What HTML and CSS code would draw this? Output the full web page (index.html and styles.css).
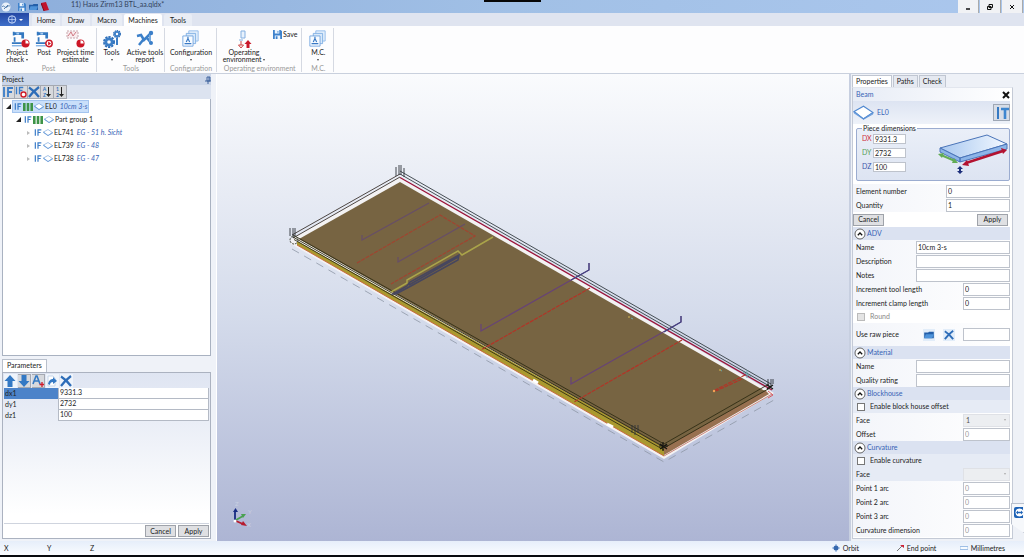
FILE: index.html
```html
<!DOCTYPE html>
<html lang="en">
<head>
<meta charset="utf-8">
<title>11) Haus Zirm13 BTL_aa.qldx*</title>
<link rel="stylesheet" href="styles.css">
</head>
<body>
<svg class="defs" aria-hidden="true">
  <defs>
    <linearGradient id="blue" x1="0" y1="0" x2="1" y2="0"><stop offset="0" stop-color="#a9c8f0"/><stop offset="1" stop-color="#f2f8ff"/></linearGradient>
    <symbol id="machine" viewBox="0 0 20 20"><path d="M3 4h10v5.500" fill="none" stroke="#3478c0" stroke-width="3"/><path d="M3 2v4M4 8v5M1 14.500h11" fill="none" stroke="#3478c0" stroke-width="2"/><path d="M1 17.500h11" fill="none" stroke="#7fb0e4" stroke-width="1.500"/><path d="M6 3h3v2H6z" fill="#a7cbf0"/></symbol>
    <symbol id="clock" viewBox="0 0 10 10"><circle cx="5" cy="5" r="4.500" fill="#cc1626"/><path d="M5 5V1.500A3.500 3.500 0 0 1 8.500 5z" fill="#fff"/></symbol>
    <symbol id="play" viewBox="0 0 10 10"><circle cx="5" cy="5" r="4" fill="#fff" stroke="#cc1626" stroke-width="1.800"/><path d="M4 2.500v5L7.500 5z" fill="#cc1626"/></symbol>
    <symbol id="gear" viewBox="0 0 12 12"><circle cx="6" cy="6" r="5" fill="none" stroke="#2f6fb9" stroke-width="2" stroke-dasharray="2.200 1"/><circle cx="6" cy="6" r="3.200" fill="none" stroke="#3c7ec6" stroke-width="2.800"/></symbol>
    <symbol id="layers" viewBox="0 0 20 20"><path d="M8 1h11v12H8z" fill="#e4f0fc" stroke="#8ab7e8"/><path d="M5 4h11v12H5z" fill="#d9e9fa" stroke="#7aabe2"/><path d="M1 7h12v12H1z" fill="#f7fbff" stroke="#6ba1de"/><path d="M3 16h8M5 14l2-4 2 4M7 8v2" fill="none" stroke="#3979c5" stroke-width="1.400"/></symbol>
    <symbol id="save" viewBox="0 0 10 10"><path d="M0 0h8.500L10 1.500V10H0z" fill="#3e82cc"/><path d="M2 0h5v4H2zM2 6h6v4H2z" fill="#edf6ff"/><path d="M5 1h1v2H5zM3 7h2v3H3z" fill="#3e82cc"/></symbol>
    <symbol id="cross" viewBox="0 0 12 12"><path d="M1 1.500C5 4 8 7 11 11M11 1C7 4 4 7 1 11" fill="none" stroke="#2e6db8" stroke-width="2.200"/></symbol>
    <symbol id="slab" viewBox="0 0 20 14"><path d="M1 6l9-5 9 6-9 6z" fill="#fff" stroke="#4f88d0"/><path d="M1 6v1.500L10 13.500l9-5V7l-9 6z" fill="#7fafe6" stroke="#4f88d0" stroke-width=".6"/></symbol>
    <symbol id="bars" viewBox="0 0 10 8"><path d="M0 0h2.600v8H0zM3.700 0h2.600v8H3.700zM7.400 0H10v8H7.400z" fill="#3e9448"/></symbol>
    <symbol id="if" viewBox="0 0 12 12"><path d="M2 1v10M6 1v10M6 2h5M6 6h4" fill="none" stroke="#3a7cc8" stroke-width="1.800"/></symbol>
    <symbol id="up" viewBox="0 0 12 12"><path d="M6 0l5.500 6H8.500v6h-5V6H.5z" fill="#3479c4"/></symbol>
    <symbol id="folder" viewBox="0 0 12 10"><path d="M0 2h5l1-1h6v8H0z" fill="#245fa9"/><path d="M2 4h10l-2 5H0z" fill="#4e93da"/></symbol>
    <symbol id="chev" viewBox="0 0 12 12"><circle cx="6" cy="6" r="5" fill="#fff" stroke="#555" stroke-width=".9"/><path d="M3.800 7.200L6 5l2.200 2.200" fill="none" stroke="#111" stroke-width="1.300"/></symbol>
  </defs>
</svg>
<div class="app">
  <header class="titlebar">
    <div class="quick">
      <svg width="10" height="10" viewBox="0 0 10 10"><circle cx="5" cy="5" r="4.500" fill="#e9f1fa"/><path d="M1 5c2-3 3 2 5 0s2-1 3-1M3 7l4-4" fill="none" stroke="#557fae"/></svg>
      <svg class="gap" width="8" height="8"><use href="#save"/></svg>
      <svg width="9" height="8"><use href="#folder"/></svg>
      <svg width="8" height="9" viewBox="0 0 8 9"><path d="M0 1l5-1 3 8-5 1z" fill="#c1142c"/><path d="M0 1l3 8" stroke="#7c0919"/></svg>
    </div>
    <span class="doc">11) Haus Zirm13 BTL_aa.qldx*</span>
    <span class="notch"></span>
    <div class="winbtns">
      <button aria-label="Minimise"><svg width="8" height="8"><path d="M2 6h4" stroke="#111" stroke-width="1.500"/></svg></button>
      <button aria-label="Restore"><svg width="8" height="8"><path d="M3 1.500h3.500v3H3zM1.500 3.500H5v3H1.500z" fill="#eee" stroke="#111"/></svg></button>
      <button aria-label="Close"><svg width="8" height="8"><path d="M2 2l4 4M6 2L2 6" stroke="#111"/></svg></button>
    </div>
  </header>
  <nav class="tabs">
    <button class="appmenu" aria-label="Application menu"><svg width="10" height="9" viewBox="0 0 10 9"><circle cx="5" cy="4.500" r="3.700" fill="none" stroke="#c5d8fa"/><path d="M1 4.500h8M5 1v7" stroke="#c5d8fa" stroke-width=".7"/></svg><i class="arr light"></i></button>
    <button class="w-home">Home</button><button class="w-draw">Draw</button><button class="w-macro">Macro</button><button class="w-mach on">Machines</button><button class="w-tools">Tools</button>
  </nav>
  <section class="ribbon">
    <div class="group">
      <div class="cmds">
        <button class="c32"><svg width="26" height="20"><use href="#machine" x="7" y="1" width="18" height="18"/><use href="#clock" x="17" y="10" width="9" height="9"/></svg><span>Project<br>check <i class="arr"></i></span></button>
        <button class="c20"><svg width="20" height="20"><use href="#machine" x="1" y="1" width="18" height="18"/><use href="#play" x="11" y="10" width="8" height="9"/></svg><span>Post</span></button>
        <button class="c40"><svg width="26" height="20"><path d="M4 2h11v7H4z" fill="#f8ecee" stroke="#c8a7ad" stroke-dasharray="2 1"/><path d="M5 7l3-4 2 4 3-4" fill="none" stroke="#d07883"/><use href="#clock" x="13" y="10" width="9" height="9"/></svg><span>Project time<br>estimate</span></button>
      </div><div class="gname">Post</div>
    </div>
    <div class="group">
      <div class="cmds">
        <button class="c26"><svg width="20" height="20"><use href="#gear" x="1" y="7" width="12" height="12"/><use href="#gear" x="11" y="1" width="8" height="8"/><path d="M15 9v7" stroke="#3c7ec6" stroke-width="2"/></svg><span>Tools<br><i class="arr"></i></span></button>
        <button class="c36"><svg width="20" height="20"><path d="M2 7l4-1 3 5 7-7M4 16l4-5M12 9l4 5" fill="none" stroke="#3b7fc9" stroke-width="2.500"/><path d="M15 5v8" stroke="#76a9de" stroke-width="2"/><circle cx="16" cy="4" r="2.200" fill="#3b7fc9"/><circle cx="16" cy="14" r="2" fill="#3b7fc9"/></svg><span>Active tools<br>report</span></button>
      </div><div class="gname">Tools</div>
    </div>
    <div class="group">
      <div class="cmds">
        <button class="c44"><svg width="20" height="20"><use href="#layers" x="1" y="1" width="17" height="17"/></svg><span>Configuration<br><i class="arr"></i></span></button>
      </div><div class="gname">Configuration</div>
    </div>
    <div class="group">
      <div class="cmds">
        <button class="c50"><svg width="20" height="20"><path d="M7 2h4v7H7zM5 11h4" fill="#e8f2fd" stroke="#84afe0"/><path d="M7 12v4M7 19l-2.500-3h5z" fill="#fff" stroke="#c44"/><path d="M14 11l-3.500 4h2v4h3v-4h2z" fill="#c9182a"/></svg><span>Operating<br>environment <i class="arr"></i></span></button>
        <button class="inline"><svg width="9" height="9"><use href="#save"/></svg>Save</button>
      </div><div class="gname">Operating environment</div>
    </div>
    <div class="group">
      <div class="cmds">
        <button class="c22"><svg width="20" height="20"><use href="#layers" x="1" y="1" width="17" height="17"/></svg><span>M.C.<br><i class="arr"></i></span></button>
      </div><div class="gname">M.C.</div>
    </div>
  </section>

  <main class="work">
    <aside class="left">
      <section class="project">
        <h2>Project <svg width="6" height="8" viewBox="0 0 6 8"><path d="M2 1h3v4H2zM0 5h6M3 5v3M4 1v4" fill="none" stroke="#40649e"/></svg></h2>
        <div class="tools">
          <button aria-label="Show all"><svg width="12" height="12"><use href="#if"/></svg></button>
          <button aria-label="Hide"><svg width="12" height="12"><use href="#if" width="9" height="9"/><circle cx="8.500" cy="8.500" r="2.500" fill="#fff" stroke="#d01f2b" stroke-width="1.400"/></svg></button>
          <button aria-label="Delete"><svg width="12" height="12"><use href="#cross"/></svg></button>
          <button aria-label="Sort by name"><span class="sort"><b>A</b><b>Z</b></span><svg width="5" height="12"><path d="M2.500 1v8" stroke="#222"/><path d="M0 8h5l-2.500 3z" fill="#222"/></svg></button>
          <button aria-label="Sort by number"><span class="sort"><b>1</b><b>2</b></span><svg width="5" height="12"><path d="M2.500 1v8" stroke="#222"/><path d="M0 8h5l-2.500 3z" fill="#222"/></svg></button>
        </div>
        <ul class="tree">
          <li><i class="open"></i><span class="node sel"><svg width="8" height="9"><use href="#if"/></svg><svg width="10" height="8"><use href="#bars"/></svg><svg width="10" height="9"><use href="#slab"/></svg>EL0 <em>10cm 3-s</em></span></li>
          <li class="l1"><i class="open"></i><span class="node"><svg width="8" height="9"><use href="#if"/></svg><svg width="10" height="8"><use href="#bars"/></svg><svg width="10" height="9"><use href="#slab"/></svg>Part group 1</span></li>
          <li class="l2"><i class="shut"></i><span class="node"><svg width="8" height="9"><use href="#if"/></svg><svg width="10" height="9"><use href="#slab"/></svg>EL741 <em>EG - 51 h. Sicht</em></span></li>
          <li class="l2"><i class="shut"></i><span class="node"><svg width="8" height="9"><use href="#if"/></svg><svg width="10" height="9"><use href="#slab"/></svg>EL739 <em>EG - 48</em></span></li>
          <li class="l2"><i class="shut"></i><span class="node"><svg width="8" height="9"><use href="#if"/></svg><svg width="10" height="9"><use href="#slab"/></svg>EL738 <em>EG - 47</em></span></li>
        </ul>
      </section>
      <section class="params">
        <div class="ptabs"><button>Parameters</button></div>
        <div class="pbox">
          <div class="tools ptools">
            <button class="flat" aria-label="Move up"><svg width="12" height="12"><use href="#up"/></svg></button>
            <button aria-label="Move down"><svg width="12" height="12"><path d="M6 12L.5 6h3V0h5v6h3z" fill="#3479c4"/></svg></button>
            <button aria-label="Rename"><svg width="12" height="12"><path d="M1 9l3-8h1l3 8M2 6h5" fill="none" stroke="#3479c4" stroke-width="1.600"/><path d="M10 7v5M7.500 9.500h5" stroke="#cf1b2a" stroke-width="1.300"/></svg></button>
            <button class="flat" aria-label="Import"><svg width="12" height="12"><path d="M2 1h5l2 2v8H2z" fill="#fff" stroke="#c7d7ea"/><path d="M2 9c1-4 3-5 5-5V2l4 4-4 3V7C5 7 4 8 4 10z" fill="#3479c4"/></svg></button>
            <button class="flat" aria-label="Remove"><svg width="12" height="12"><use href="#cross"/></svg></button>
          </div>
          <div class="prow cur"><label for="dx1">dx1</label><input id="dx1" value="9331.3"></div>
          <div class="prow"><label for="dy1">dy1</label><input id="dy1" value="2732"></div>
          <div class="prow"><label for="dz1">dz1</label><input id="dz1" value="100"></div>
          <div class="pfoot"><button class="btn">Cancel</button><button class="btn">Apply</button></div>
        </div>
      </section>
    </aside>

    <section class="view">
      <svg viewBox="217 74 632 467" preserveAspectRatio="xMidYMid slice" fill="none" role="img" aria-label="3D view of the panel">
        <path d="M399 177L291 239v5L664 459l110-66z" fill="#f3f2f3"/>
        <path d="M292 249L664 462l110-62" stroke="#8e97a6" stroke-width=".8" stroke-dasharray="8 6"/>
        <path d="M297 241L664 447v9L297 245z" fill="#aa992f"/>
        <path d="M664 447l101-57 4 4-105 61z" fill="#987050"/>
        <path d="M400 182L299 239 664 448l101-57z" fill="#776442"/>
        <path d="M297 245L664 456" stroke="#c86037" stroke-width=".9"/>
        <path d="M664 456l108-62" stroke="#c87a6c" stroke-width=".9"/>
        <path d="M400 177.500L772 390" stroke="#9c1238" stroke-width="1.300"/>
        <path d="M292 235L400 174M293 238L400 177" stroke="#4e4744"/>
        <path d="M400 171L771 384M400 174L771 387" stroke="#343c42" stroke-width=".9"/>
        <path d="M293 235L664 444M293 237L664 447M294 239.500L664 450M664 444l105-60M664 448l106-60" stroke="#302c14" stroke-width=".9"/>
        <path d="M396 176v-9M399 175v-10M401 175v-10M404 177v-9M290 236v-8M293 238v-10M295 236v-8M632 433v-8M635 435v-10M638 433v-8M768 386v-7M771 387v-8M773 384v-5" stroke="#30343a" stroke-width=".9"/>
        <circle cx="294" cy="240" r="4" stroke="#494b3e" stroke-dasharray="2 1"/>
        <path d="M660 444l7 5m-7 0l7-5m-4-2v9m-4-5h9M767 385l6 4m-6 0l6-4" stroke="#151510" stroke-width="1.200"/>
        <g stroke="#674e68" stroke-width="1.200"><path d="M429 203L362 240v-5M465 224l-67 38v-5"/></g>
        <path d="M589 263v7L481 331v-7M681 316v6l-110 62v-7" stroke="#674377" stroke-width="1.200"/>
        <path d="M589 263v7l-18 10M681 316v6l-17 10" stroke="#404284" stroke-width="1.100"/>
        <g stroke="#a04430" stroke-width="1.200" stroke-dasharray="4 1"><path d="M357 263l83-48 35 21-84 48"/></g>
        <g stroke="#b23427" stroke-width="1.200" stroke-dasharray="4 1"><path d="M590 288L481 350M682 340l-108 62M745 375l-32 16M742 379l-26 12"/></g>
        <path d="M391 292l16-9v-3l51-29 4 4 31-18" stroke="#aaa44a" stroke-width="1.500"/>
        <path d="M393 294l14-8 3-4 49-27-1 5-47 26-15 8zM409 285l49-28" stroke="#46465f" stroke-width="1.500"/>
        <path d="M533 380l5 3M607 424l6 3" stroke="#fff" stroke-width="3"/>
        <path d="M743 372l8 5m-4-7v8M631 318l2 1M720 370l2 1" stroke="#6aa9ae"/>
        <circle cx="714" cy="391" r="1.200" fill="#f4a154"/><circle cx="629" cy="317" r="1" fill="#b69c50"/><circle cx="720" cy="370" r="1" fill="#b69c50"/>
        <path d="M768 391l5 4-5 3" stroke="#d85a62"/>
        <path d="M235 520v-9" stroke="#172b83" stroke-width="1.800"/><path d="M233 512l2.500-4 2.500 4z" fill="#172b83"/>
        <path d="M236 520l7-4" stroke="#49a151" stroke-width="1.800"/><path d="M241 514l5 0-3 4z" fill="#49a151"/>
        <path d="M236 521l7 3" stroke="#b61b2e" stroke-width="1.800"/><path d="M241 525l2-4 4 5z" fill="#b61b2e"/><circle cx="235" cy="521" r="1.500" fill="#fff"/>
        <g class="axes"><text x="235" y="506">Z</text><text x="248" y="514">Y</text><text x="247" y="527">X</text></g>
      </svg>
    </section>

    <aside class="right">
      <div class="rtabs"><button class="on">Properties</button><button>Paths</button><button>Check</button></div>
      <div class="props">
        <div class="rhead beam"><span>Beam</span><button aria-label="Close panel"><svg width="8" height="8"><path d="M1 1l6 6M7 1L1 7" stroke="#111" stroke-width="2"/></svg></button></div>
        <div class="elem"><svg width="21" height="15"><use href="#slab"/></svg><span>EL0</span><button aria-label="Tool settings"><svg width="14" height="14"><path d="M3 1v6M3 7v6" stroke="#3579c3" stroke-width="2"/><path d="M6 3h8M10 3v10" stroke="#3e86cf" stroke-width="2.600"/></svg></button></div>
        <fieldset>
          <legend>Piece dimensions</legend>
          <div class="dims">
            <div><label class="dx" for="pdx">DX</label><input id="pdx" value="9331.3"></div>
            <div><label class="dy" for="pdy">DY</label><input id="pdy" value="2732"></div>
            <div><label class="dz" for="pdz">DZ</label><input id="pdz" value="100"></div>
          </div>
          <svg width="70" height="42" viewBox="0 0 70 42"><path d="M2 15L49 2l20 9-47 14z" fill="url(#blue)" stroke="#4a74b8"/><path d="M2 15v4l20 10v-4zM22 25v4l47-13v-5z" fill="#8db5e8" stroke="#4a74b8"/><path d="M3 22l14 6" stroke="#62ac55" stroke-width="2"/><path d="M0 21l6-1-2 5zM20 30l-6 0 2-5z" fill="#62ac55"/><path d="M28 30l37-12" stroke="#b31230" stroke-width="2.500"/><path d="M24 32l5-5 2 6zM69 17l-6-2 2 6z" fill="#b31230"/><path d="M22 34v5" stroke="#1c2e7a" stroke-width="2"/><path d="M19 36l3-3 3 3zM19 38l3 3 3-3z" fill="#1c2e7a"/></svg>
        </fieldset>
        <div class="row"><label for="en">Element number</label><input class="w64" id="en" value="0"></div>
        <div class="row"><label for="qt">Quantity</label><input class="w64" id="qt" value="1"></div>
        <div class="rbtns"><button class="btn">Cancel</button><button class="btn">Apply</button></div>

        <button class="rhead"><svg width="12" height="12"><use href="#chev"/></svg>ADV</button>
        <div class="row"><label for="nm">Name</label><input class="w94" id="nm" value="10cm 3-s"></div>
        <div class="row"><label for="ds">Description</label><input class="w94" id="ds"></div>
        <div class="row"><label for="nt">Notes</label><input class="w94" id="nt"></div>
        <div class="row"><label for="it">Increment tool length</label><input class="w46" id="it" value="0"></div>
        <div class="row"><label for="ic">Increment clamp length</label><input class="w46" id="ic" value="0"></div>
        <div class="chk off"><input type="checkbox" id="rd" disabled><label for="rd">Round</label></div>
        <div class="row raw"><label for="rw">Use raw piece</label><button aria-label="Browse"><svg width="10" height="8"><use href="#folder"/></svg></button><button aria-label="Clear"><svg width="10" height="10"><use href="#cross"/></svg></button><input class="w46" id="rw"></div>

        <button class="rhead"><svg width="12" height="12"><use href="#chev"/></svg>Material</button>
        <div class="row"><label for="mn">Name</label><input class="w94" id="mn"></div>
        <div class="row"><label for="qr">Quality rating</label><input class="w94" id="qr"></div>

        <button class="rhead"><svg width="12" height="12"><use href="#chev"/></svg>Blockhouse</button>
        <div class="chk tint"><input type="checkbox" id="eb"><label for="eb">Enable block house offset</label></div>
        <div class="row"><label for="bf">Face</label><span class="pick w46"><select id="bf" disabled><option>1</option></select><i class="arr"></i></span></div>
        <div class="row"><label for="bo">Offset</label><input class="w46" id="bo" value="0" disabled></div>

        <button class="rhead"><svg width="12" height="12"><use href="#chev"/></svg>Curvature</button>
        <div class="chk tint"><input type="checkbox" id="ec"><label for="ec">Enable curvature</label></div>
        <div class="row tint"><label for="cf">Face</label><span class="pick w46"><select id="cf" disabled><option></option></select><i class="arr"></i></span></div>
        <div class="row"><label for="p1">Point 1 arc</label><input class="w46" id="p1" value="0" disabled></div>
        <div class="row"><label for="p2">Point 2 arc</label><input class="w46" id="p2" value="0" disabled></div>
        <div class="row"><label for="p3">Point 3 arc</label><input class="w46" id="p3" value="0" disabled></div>
        <div class="row"><label for="cd">Curvature dimension</label><input class="w46" id="cd" value="0" disabled></div>
      </div>
      <button class="float" aria-label="Remote support"><svg width="9" height="11" viewBox="0 0 9 11"><rect width="12" height="11" rx="2" fill="#1d62b6"/><circle cx="5.500" cy="5.500" r="4" fill="#fff"/><path d="M2 5.500l2-2v1.200h3V3.500l2 2-2 2V6.300H4v1.200z" fill="#1d62b6"/></svg></button>
    </aside>
  </main>

  <footer class="status">
    <span class="xyz">X</span><span class="xyz">Y</span><span class="xyz">Z</span>
    <div class="modes">
      <span><svg width="8" height="8"><path d="M4 0v8M0 4h8" stroke="#7ba4da"/><circle cx="4" cy="4" r="2.500" fill="#3567ad"/></svg>Orbit</span>
      <span><svg width="8" height="8"><path d="M1 7l5-5" stroke="#777"/><path d="M4 1h4v3z" fill="#cf2034"/></svg>End point</span>
      <span><svg width="8" height="8"><path d="M0 2.500h8v3H0z" fill="#f7fbff" stroke="#9fbfe6"/></svg>Millimetres</span>
    </div>
  </footer>
</div>
</body>
</html>
```
FILE: styles.css
```css
* { box-sizing: border-box; }
body { margin: 0; font: 7px/9px Lato, "Noto Sans", sans-serif; color: #222; background: #000; }
button, input, select { font: inherit; color: inherit; margin: 0; padding: 0; border: 0; background: none; border-radius: 0; }
svg { display: block; flex: none; }
.defs { position: absolute; width: 0; height: 0; }
.app { height: 100vh; min-height: 555px; display: flex; flex-direction: column; border-bottom: 2px solid #080a0e; background: #eef1f8; }

.titlebar { display: grid; grid-template-columns: 1fr 57px 1fr; height: 13px; flex: none; background: linear-gradient(90deg, #8daedb, #a1c0e6 50%, #abc7ed); position: relative; }
.quick { display: flex; align-items: center; gap: 3px; padding-left: 1px; }
.quick .gap { margin-left: 4px; }
.doc { position: absolute; left: 71px; top: 0; color: #33435c; }
.notch { height: 2px; background: #070707; }
.winbtns { display: flex; justify-content: flex-end; gap: 1px; padding-right: 1px; }
.winbtns button { width: 21px; background: #f1f2f5; border-right: 1px solid #aaa; display: grid; place-items: center; }

.tabs { height: 13px; flex: none; display: flex; gap: 2px; background: #dfe4f0; }
.tabs button { background: #e9edf5; border-radius: 2px 2px 0 0; text-align: center; margin-top: 1px; }
.tabs .appmenu { width: 29px; margin: 0 1px 0 0; display: flex; align-items: center; justify-content: center; gap: 2px; background: linear-gradient(#2447a4, #3f6fc9); border-radius: 0; }
.tabs .on { background: #fff; }
.w-home { width: 28px; } .w-draw { width: 28px; } .w-macro { width: 30px; } .w-mach { width: 38px; } .w-tools { width: 28px; }
.arr { display: inline-block; border: 1px solid transparent; border-top: 2px solid #444; border-bottom: 0; vertical-align: middle; }
.arr.light { border-width: 2px 2px 0; border-top-color: #fff; }

.ribbon { height: 48px; flex: none; display: flex; background: #fdfdfe; border-bottom: 1px solid #c9d0dd; line-height: 7px; }
.group { display: flex; flex-direction: column; justify-content: space-between; padding: 1px 0 0 1px; border-right: 1px solid #d5d9e2; margin: 2px 0 1px; }
.cmds { display: flex; align-items: flex-start; gap: 1px; }
.cmds button { display: flex; flex-direction: column; align-items: center; line-height: 7px; white-space: nowrap; }
.cmds .inline { flex-direction: row; gap: 1px; padding: 1px 4px 0 2px; margin-left: auto; }
.c32 { width: 32px; } .c20 { width: 20px; } .c40 { width: 41px; } .c26 { width: 27px; } .c36 { width: 38px; } .c44 { width: 50px; } .c50 { width: 52px; } .c22 { width: 30px; }
.gname { text-align: center; color: #999; padding: 0 5px; }
.group:nth-child(3) .gname, .group:nth-child(5) .gname { padding: 0; }

.work { flex: 1; min-height: 0; display: flex; }
.left { width: 217px; flex: none; display: flex; flex-direction: column; padding: 0 5px 2px 2px; background: #eff2f8; border-right: 1px solid #fff; }
.project { flex: 284 1 0; display: flex; flex-direction: column; min-height: 0; }
h2 { margin: 0; height: 11px; flex: none; font: inherit; display: flex; justify-content: space-between; align-items: center; background: #cbd6e9; }
.tools { display: flex; height: 14px; flex: none; background: #dce3f0; }
.tools button { width: 13px; height: 14px; display: flex; align-items: center; justify-content: center; background: #d7d9dd; border: 1px solid #a5a9b1; border-left-width: 0; }
.tools .flat { background: #eff4fb; border-color: #dce3f0; }
.sort { display: flex; flex-direction: column; font-size: 5px; line-height: 6px; color: #3472bd; }
.tree { list-style: none; margin: 0; padding: 1px 2px; flex: 1; background: #fff; border: 1px solid #a9b2c1; border-top: 0; }
.tree li { display: flex; align-items: center; gap: 1px; height: 13px; padding-left: 1px; }
.tree .l1 { padding-left: 11px; } .tree .l2 { padding-left: 22px; }
.node { display: flex; align-items: center; gap: 1px; height: 13px; padding: 0 1px; white-space: nowrap; border: 1px solid transparent; }
.node em { color: #3763b5; margin-left: 2px; }
.sel { background: #c9dffa; border-color: #a3c4ef; }
.open { border-left: 5px solid transparent; border-bottom: 5px solid #222; }
.shut { width: 4px; border: 2px solid transparent; border-left: 3px solid #bbb; border-right: 0; }

.params { flex: 182 1 0; display: flex; flex-direction: column; padding-top: 3px; min-height: 0; }
.ptabs { display: flex; }
.ptabs button { padding: 1px 4px; height: 13px; background: #fff; border: 1px solid #b9c0cc; border-bottom: 0; }
.pbox { flex: 1; display: flex; flex-direction: column; border: 1px solid #abb2c0; padding: 1px; background: linear-gradient(#dfe5f2, #fff 86%); }
.ptools { background: none; gap: 1px; }
.ptools .flat { border-color: transparent; }
.prow { display: flex; height: 11px; }
.prow label { width: 54px; padding-left: 1px; line-height: 10px; }
.prow input { flex: 1; min-width: 0; padding-left: 1px; background: #fff; border: 1px solid #b4bac5; border-top-width: 0; }
.cur label { background: #4c83c9; }
.pfoot { margin-top: auto; display: flex; justify-content: flex-end; gap: 2px; padding-top: 1px; background: #fff; border-top: 1px solid #cfd4de; }
.btn { height: 12px; width: 31px; background: #dfe0e3; border: 1px solid #9fa3aa; line-height: 9px; }

.view { flex: 1; min-width: 0; background: linear-gradient(#fafbfd, #d4dbeb 52%, #adb5d4); }
.view svg { width: 100%; height: 100%; }
.axes text { font-size: 6px; fill: #c8d0e2; }

.right { width: 175px; flex: none; padding: 1px 11px 2px 1px; background: #eef1f7; border-left: 2px solid #c7cfe0; position: relative; display: flex; flex-direction: column; }
.rtabs { display: flex; flex: none; height: 12px; gap: 1px; }
.rtabs button { padding: 0 3px; background: #e5e9f1; border: 1px solid #c0c6d1; border-bottom: 0; }
.rtabs .on { background: #fff; }
.props { flex: 1; background: #fff; border: 1px solid #c4cad6; border-top-color: #e2e6ee; padding-right: 2px; display: flex; flex-direction: column; }
.rhead { height: 13px; display: flex; align-items: center; gap: 1px; padding-left: 1px; color: #3763b5; background: #dbe2f1; text-align: left; }
.beam { justify-content: space-between; padding-left: 3px; background: linear-gradient(90deg, #e7ecf6, #fff); }
.elem { display: flex; align-items: center; gap: 3px; height: 23px; color: #3763b5; background: linear-gradient(#dde4f2, #eef2f9); }
.elem button { margin-left: auto; width: 17px; height: 17px; border: 1px solid #9ea7b5; background: #d7dde7; display: grid; place-items: center; }
fieldset { margin: 0 0 3px 3px; padding: 0 1px 4px 5px; border: 1px solid #9bacd0; border-radius: 2px; height: 57px; min-width: 0; display: flex; justify-content: space-between; align-items: flex-start; background: linear-gradient(#eaeff8, #dde4f2); }
legend { padding: 0 1px; line-height: 9px; }
.dims { display: flex; flex-direction: column; gap: 3px; }
.dims div { display: flex; align-items: center; gap: 1px; height: 11px; }
.dims input { width: 33px; height: 10px; }
.dims label { width: 10px; }
.dx { color: #cf3040; } .dy { color: #55a055; } .dz { color: #3c56aa; }
.props input:not([type]) { background: #fff; border: 1px solid #bec3cc; padding-left: 1px; }
.row { display: flex; align-items: center; height: 14px; padding-left: 3px; background: linear-gradient(90deg, #f3f5fa, #fff); }
.row label { flex: 1; white-space: nowrap; }
.row input, .pick { height: 13px; }
.props .w64 { width: 64px; } .props .w94 { width: 94px; } .props .w46 { width: 47px; }
.props input:disabled { color: #999; }
.pick { display: flex; align-items: center; padding: 0 3px 0 2px; background: #eceef1; border: 1px solid #dfe1e6; }
.pick select { flex: 1; min-width: 0; appearance: none; opacity: 1; color: #555; }
.pick .arr { border-top-color: #aaa; }
.rbtns { display: flex; justify-content: space-between; align-items: center; height: 15px; padding: 0 2px 0 0; }
.chk { display: flex; align-items: center; gap: 5px; height: 13px; padding-left: 4px; }
.chk input { appearance: none; width: 8px; height: 8px; border: 1px solid #777; background: #fff; }
.off { color: #888; } .off input { background: #e4e4e4; border-color: #bbb; }
.tint { background: #e6ebf5; }
.raw { height: 23px; }
.raw button { width: 12px; height: 12px; margin-right: 8px; display: grid; place-items: center; background: #e2edf9; }
.float { position: absolute; right: 0; bottom: 8px; width: 13px; height: 30px; padding: 3px 0 0 2px; background: #f6f8fb; border: 1px solid #b9c0cd; border-right: 0; clip-path: polygon(0 0, 100% 0, 100% 100%, 0 70%); display: flex; align-items: flex-start; }

.status { height: 14px; flex: none; display: flex; align-items: center; padding-left: 4px; background: linear-gradient(#e6eefa, #fafcff); }
.xyz { width: 43px; }
.modes { margin-left: auto; display: grid; grid-template-columns: 64px 64px auto; padding-right: 19px; }
.modes span { display: flex; align-items: center; gap: 3px; }
```
